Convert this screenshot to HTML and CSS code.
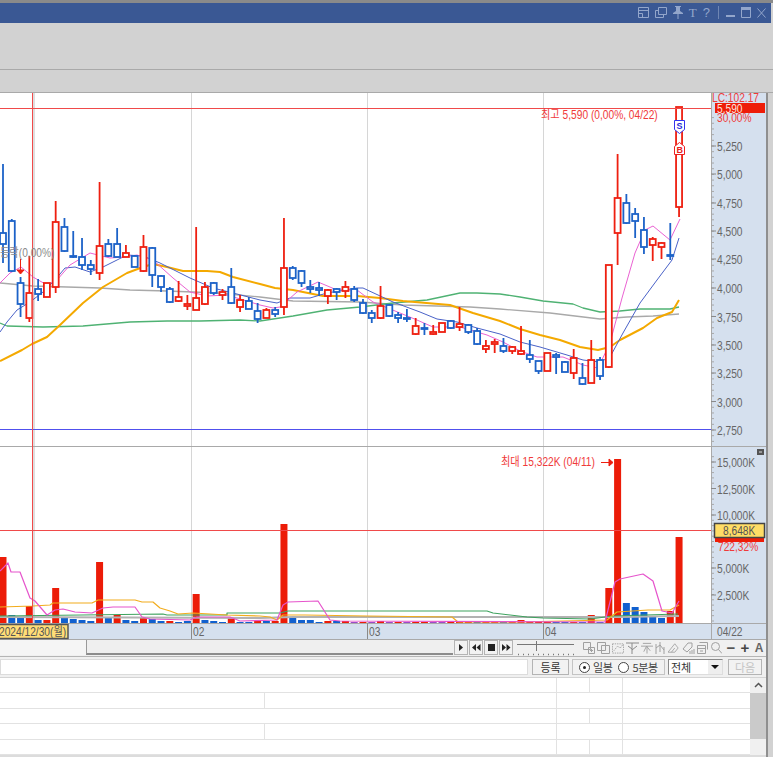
FILE: index.html
```html
<!DOCTYPE html>
<html lang="ko">
<head>
    <meta charset="UTF-8">
    <title>차트</title>
    <link rel="stylesheet" href="styles.css">
</head>
<body>
    <div class="window">
        <header class="titlebar">
            <svg class="tb-icon" width="11" height="11" viewBox="0 0 11 11"><path d="M.5.5h10v10H.5zM.5 3.5h10M.5 6.5h4v4"/></svg>
            <svg class="tb-icon tb-copy" width="12" height="11" viewBox="0 0 12 11"><path d="M3.5.5h8v7h-8zM3.5 3.5H.5v7h8V7.5"/></svg>
            <svg class="tb-icon tb-pin" width="10" height="13" viewBox="0 0 10 13"><path class="solid" d="M2 0h6v1H7v4l3 2v1H0V7l3-2V1H2z"/><path d="M5 8v5"/></svg>
            <span class="tb-text tb-t">T</span>
            <span class="tb-text tb-q">?</span>
            <span class="tb-sep"></span>
            <svg class="tb-icon tb-min" width="9" height="11" viewBox="0 0 9 11"><path class="solid" d="M0 8h9v2H0z"/></svg>
            <svg class="tb-icon tb-max" width="10" height="11" viewBox="0 0 10 11"><path d="M.5 1.5h9v9h-9z"/><path class="solid" d="M0 0h10v3H0z"/></svg>
            <svg class="tb-icon tb-close" width="9" height="10" viewBox="0 0 9 10"><path d="M.5.5l8 9M8.5.5l-8 9"/></svg>
        </header>
        <div class="toolbar"></div>
        <div class="subbar"></div>
        <div class="content">
            <div id="chart" class="chart"></div>

            <div class="controls">
                <div class="scroll-hatch"></div>
                <div class="scroll-track"></div>
                <button class="play-btn"><svg width="6" height="7" viewBox="0 0 6 7"><path d="M1 0l4 3.5-4 3.5z"/></svg></button>
                <button class="play-btn"><svg width="9" height="7" viewBox="0 0 9 7"><path d="M4 0v7L0 3.5zM8.5 0v7l-4-3.5z"/></svg></button>
                <button class="play-btn"><svg width="7" height="7" viewBox="0 0 7 7"><path d="M0 0h7v7H0z"/></svg></button>
                <button class="play-btn"><svg width="9" height="7" viewBox="0 0 9 7"><path d="M0 0v7l4-3.5zM4.5 0v7l4-3.5z"/></svg></button>
                <svg class="slider" width="60" height="16" viewBox="0 0 60 16">
                    <path class="slider-line" d="M0 4.5h57M19.5 1v10"/>
                    <path class="slider-dots" d="M1 14.5h56"/>
                </svg>
                <div class="tool-icons">
                    <svg width="12" height="12" viewBox="0 0 12 12"><path d="M.5.5h7v7h-7zM5.5 5.5h6v6h-6zM7 8.5h3M8.5 7v3"/></svg>
                    <svg width="13" height="12" viewBox="0 0 13 12"><path d="M.5.5h8v8h-8zM4.5 3.5h8v8h-8z"/></svg>
                    <svg width="12" height="12" viewBox="0 0 13 12"><path stroke-dasharray="1.5 1" d="M.5 1.5h12v10H.5zM2 9l4-5 3 2 3-4"/></svg>
                    <svg class="tool-active" width="13" height="12" viewBox="0 0 13 12"><path d="M0 1h13M6 1v11M2 4l4 3M11 4L6 8"/></svg>
                    <svg width="12" height="12" viewBox="0 0 13 12"><path d="M0 4h13M2 1h9M6.5 4v8M3 10l3-6 4 5"/></svg>
                    <svg width="11" height="12" viewBox="0 0 11 12"><path d="M1 12V2M5 10V0M9 12V5M1 6l4-3 4 5"/></svg>
                    <svg width="11" height="12" viewBox="0 0 13 12"><path d="M0 11L8 1l4 5-4 5zM4 11l4-5"/></svg>
                    <svg class="tool-gap" width="13" height="12" viewBox="0 0 13 12"><path d="M1 7l5-6h4v4L5 10zM8 9v3M10 8v4M12 7v5"/></svg>
                    <svg width="11" height="12" viewBox="0 0 11 12"><path d="M2.5.5h8v7M.5 3.5h8v8h-8zM.5 6.5h8M3 9h3"/></svg>
                    <svg class="tool-gap" width="11" height="12" viewBox="0 0 11 12"><circle cx="4.5" cy="4.5" r="4"/><path d="M7.5 7.5l3.5 4"/></svg>
                    <span class="zoom-sign zoom-minus">−</span>
                    <span class="zoom-sign">+</span>
                    <span class="zoom-sign zoom-a">A</span>
                </div>
            </div>

            <div class="form-row">
                <div class="name-field"></div>
                <button class="btn btn-reg">등록</button>
                <div class="radio-box">
                    <span class="radio radio-on"></span><span class="radio-label">일봉</span>
                    <span class="radio radio-second"></span><span class="radio-label">5분봉</span>
                </div>
                <div class="select-box">
                    <span class="select-text">전체</span>
                    <span class="select-arrow"></span>
                </div>
                <button class="btn btn-next" disabled>다음</button>
            </div>

            <div class="table-area">
                <div class="table">
                    <div class="row"><span class="c1"></span><span class="c2"></span><span class="c3"></span><span class="c4"></span></div>
                    <div class="row"><span class="ca"></span><span class="cb"></span><span class="c23"></span><span class="c4"></span></div>
                    <div class="row"><span class="c1"></span><span class="c2"></span><span class="c3"></span><span class="c4"></span></div>
                    <div class="row"><span class="ca"></span><span class="cb"></span><span class="c23"></span><span class="c4"></span></div>
                    <div class="row"><span class="c1"></span><span class="c2"></span><span class="c3"></span><span class="c4"></span></div>
                </div>
                <div class="vscroll">
                    <div class="vscroll-up"><svg width="9" height="6" viewBox="0 0 9 6"><path d="M1 5l3.5-3.5L8 5"/></svg></div>
                    <div class="vscroll-thumb"></div>
                </div>
            </div>
        </div>
    </div>
    <script src="chart.js"></script>
</body>
</html>
```

FILE: styles.css
```css
html, body {
    margin: 0;
    padding: 0;
    width: 773px;
    height: 757px;
    overflow: hidden;
    background-color: #d2d2d2;
    font-family: "Liberation Sans", "Noto Sans CJK KR", sans-serif;
}
.window {
    display: flex;
    flex-direction: column;
    height: 757px;
    border-top: 3px solid #8a8a8a;
    box-sizing: border-box;
}

/* title bar */
.titlebar {
    display: flex;
    align-items: center;
    height: 20px;
    width: 771px;
    padding-right: 5px;
    box-sizing: border-box;
    justify-content: flex-end;
    background-color: #3a5894;
}
.tb-icon {
    fill: none;
    stroke: #93a6cb;
    stroke-width: 1;
    flex: none;
}
.tb-icon .solid {
    fill: #93a6cb;
    stroke: none;
}
.tb-copy { margin-left: 6px; }
.tb-pin { margin-left: 6px; }
.tb-text {
    color: #93a6cb;
    font-size: 13px;
    line-height: 14px;
}
.tb-t {
    margin-left: 6px;
    font-family: "Liberation Serif", serif;
}
.tb-q { margin-left: 6px; }
.tb-sep {
    width: 1px;
    height: 13px;
    margin-left: 8px;
    background-color: #6f86b3;
}
.tb-min { margin-left: 7px; }
.tb-max { margin-left: 6px; }
.tb-close { margin-left: 6px; }

.toolbar {
    height: 46px;
    flex: none;
    background-color: #d2d2d2;
    border-bottom: 1px solid #a9a9a9;
}
.subbar {
    height: 22px;
    flex: none;
    background-color: #d2d2d2;
    border-bottom: 1px solid #a9a9a9;
}

.content {
    width: 766px;
    flex: 1;
    display: flex;
    flex-direction: column;
    background-color: #f0f0f0;
    box-shadow: 2px 0 0 #8f8f8f;
}

/* chart svg */
.chart {
    height: 547px;
    flex: none;
}
.chart svg { display: block; }
.plot-bg { fill: #fff; }
.axis-bg { fill: #d5e0ee; }
.sep { stroke: #a9a9a9; stroke-width: 1; }
.grid { stroke: #d6d6d6; stroke-width: 1; }
.grid-wide { stroke: #dedede; stroke-width: 2; }
.cross { stroke: #f04a4a; stroke-width: 1; }
.hline-low { stroke: #5050ee; stroke-width: 1; }
.tick { stroke: #8a8a8a; stroke-width: 1; }
.tick-minor { stroke: #a8a8a8; stroke-width: 1; }
.ma { fill: none; stroke-linejoin: round; }
.ma5 { stroke: #ea62d2; stroke-width: 1; }
.ma10 { stroke: #4a62c8; stroke-width: 1; }
.ma20 { stroke: #f4a900; stroke-width: 2; }
.ma60 { stroke: #4fb273; stroke-width: 1.3; }
.ma120 { stroke: #a9a9a9; stroke-width: 1.3; }
.vma5 { stroke: #e654cc; stroke-width: 1.2; }
.vma20 { stroke: #f2ac1c; stroke-width: 1.2; }
.vma60 { stroke: #3fa35f; stroke-width: 1.2; }
.vma120 { stroke: #b2b2b2; stroke-width: 1.8; }
.wick-r { stroke: #ee1f10; stroke-width: 1.8; }
.wick-b { stroke: #1c62c8; stroke-width: 1.8; }
.body-r { fill: #fff; stroke: #ee1f10; stroke-width: 1.8; }
.body-b { fill: #fff; stroke: #1c62c8; stroke-width: 1.8; }
.vol-r { fill: #ec1c08; }
.vol-b { fill: #1060cf; }
.vol-m { fill: #9a4cc8; }
.label {
    font-family: "Liberation Sans", "Noto Sans CJK KR", sans-serif;
    font-size: 12px;
}
.label-axis { fill: #666; }
.label-red { fill: #f03a3a; }
.label-gray { fill: #8a8a8a; }
.label-dark { fill: #555; }
.label-light { fill: #ffe3da; }
.label-sig { font-family: "Liberation Sans", sans-serif; font-size: 9px; font-weight: bold; }
.price-box { fill: #ee1c08; }
.cur-box { fill: #ffdd66; stroke: #444; stroke-width: 1.5; }
.date-box { fill: #ffdd77; stroke: #555; stroke-width: 1.5; }
.sig-s { fill: #fff; stroke: #3333ee; stroke-width: 1; }
.sig-b { fill: #fff; stroke: #ee2020; stroke-width: 1; }
.txt-s { fill: #2a2ad8; }
.txt-b { fill: #e82020; }
.arrow-red { fill: #ee1f10; stroke: #ee1f10; stroke-width: 1; }
.mini-btn { fill: #555; }
.mini-btn-line { stroke: #ddd; stroke-width: 1; }

/* chart controls */
.controls {
    display: flex;
    align-items: center;
    height: 16px;
    flex: none;
}
.scroll-hatch {
    width: 86px;
    height: 15px;
    flex: none;
    background-color: #f5f5f5;
}
.scroll-track {
    width: 367px;
    height: 15px;
    flex: none;
    box-sizing: border-box;
    background-color: #efefef;
    border-left: 1px solid #999;
    border-bottom: 2px solid #8c8c8c;
}
.play-btn {
    width: 14px;
    height: 15px;
    padding: 0;
    margin-left: 1px;
    flex: none;
    display: flex;
    align-items: center;
    justify-content: center;
    background-color: #f2f2f2;
    border: 1px solid #b4b4b4;
    box-sizing: border-box;
}
.play-btn svg { fill: #222; }
.slider {
    margin-left: 4px;
    flex: none;
}
.slider-line { fill: none; stroke: #777; stroke-width: 1; }
.slider-dots { fill: none; stroke: #777; stroke-width: 1.5; stroke-dasharray: 1 4; }
.tool-icons {
    display: flex;
    align-items: center;
    gap: 2px;
    margin-left: 6px;
    flex: none;
}
.tool-icons svg {
    fill: none;
    stroke: #a0a0a0;
    stroke-width: 1;
    flex: none;
}
.tool-icons .tool-active {
    stroke: #8a8a8a;
}
.tool-icons .tool-gap { margin-left: 1px; }
.zoom-sign {
    color: #444;
    font-size: 15px;
    font-weight: bold;
    line-height: 14px;
    width: 10px;
    text-align: center;
    margin-left: 2px;
    flex: none;
}
.zoom-minus { color: #555; }
.zoom-a { font-size: 12px; color: #666; }

/* search row */
.form-row {
    display: flex;
    align-items: center;
    height: 22px;
    padding-top: 1px;
    flex: none;
    border-top: 1px solid #b5b5b5;
    border-bottom: 1px solid #d4d4d4;
    box-sizing: border-box;
    background-color: #f0f0f0;
}
.name-field {
    width: 528px;
    height: 16px;
    flex: none;
    background-color: #fff;
    border: 1px solid #dcdcdc;
    box-sizing: border-box;
}
.btn {
    height: 16px;
    padding: 0;
    font-family: "Noto Sans CJK KR", sans-serif;
    font-size: 11px;
    line-height: 13px;
    background-color: #f2f2f2;
    border: 1px solid #b4b4b4;
    color: #333;
    flex: none;
    box-sizing: border-box;
}
.btn-reg {
    width: 37px;
    margin-left: 4px;
}
.btn-next {
    width: 34px;
    margin-left: 5px;
    color: #c4c4c4;
}
.radio-box {
    display: flex;
    align-items: center;
    width: 93px;
    height: 16px;
    margin-left: 3px;
    padding-left: 6px;
    box-sizing: border-box;
    background-color: #f2f2f2;
    border: 1px solid #c4c4c4;
    flex: none;
}
.radio {
    width: 9px;
    height: 9px;
    border: 1px solid #444;
    border-radius: 50%;
    background-color: #fff;
    flex: none;
    position: relative;
}
.radio-on::after {
    content: "";
    position: absolute;
    left: 3px;
    top: 3px;
    width: 3px;
    height: 3px;
    border-radius: 50%;
    background-color: #222;
}
.radio-second { margin-left: 6px; }
.radio-label {
    margin-left: 3px;
    font-family: "Noto Sans CJK KR", sans-serif;
    font-size: 11px;
    letter-spacing: -0.4px;
    color: #444;
    line-height: 14px;
}
.select-box {
    display: flex;
    justify-content: space-between;
    align-items: center;
    width: 55px;
    height: 16px;
    margin-left: 3px;
    background-color: #fff;
    border: 1px solid #8a8a8a;
    border-right-color: #ddd;
    border-bottom-color: #ddd;
    box-sizing: border-box;
    flex: none;
}
.select-text {
    padding-left: 2px;
    font-family: "Noto Sans CJK KR", sans-serif;
    font-size: 11px;
    color: #333;
    line-height: 14px;
}
.select-arrow {
    width: 14px;
    height: 14px;
    background-color: #eee;
    position: relative;
}
.select-arrow::after {
    content: "";
    position: absolute;
    left: 3px;
    top: 5px;
    border-left: 4px solid transparent;
    border-right: 4px solid transparent;
    border-top: 4px solid #111;
}

/* table */
.table-area {
    flex: 1;
    display: flex;
    min-height: 0;
    background-color: #fff;
    border-bottom: 2px solid #dcdcdc;
}
.table {
    width: 750px;
    flex: none;
    padding-top: 0.5px;
}
.row {
    display: flex;
    height: 15.4px;
    border-bottom: 1px solid #e2e2e2;
    box-sizing: border-box;
}
.row span {
    display: block;
    border-right: 1px solid #e2e2e2;
    box-sizing: border-box;
    flex: none;
}
.c1 { width: 557px; }
.c2 { width: 33px; }
.c3 { width: 33px; }
.c23 { width: 66px; }
.ca { width: 265px; }
.cb { width: 292px; }
.row .c4 { flex: 1; border-right: 0; }
.vscroll {
    flex: 1;
    background-color: #f0f0f0;
}
.vscroll-up {
    height: 15px;
    display: flex;
    align-items: center;
    justify-content: center;
}
.vscroll-up svg {
    fill: none;
    stroke: #555;
    stroke-width: 1.5;
}
.vscroll-thumb {
    height: 46px;
    background-color: #cacaca;
}
```

FILE: chart.js
```js
// price + volume chart, coordinates are page pixels (viewBox starts at y=93)
const NS = 'http://www.w3.org/2000/svg';
const PLOT_RIGHT = 711;
const WIDTH = 766;
const STEP = 8.78;
const LABEL_SQUEEZE = 0.85;  // the terminal font is narrower than Arial

// wick top, body top, body bottom, wick bottom, color
const CANDLES = [
    [164, 233, 244, 263, 'b'], [219, 221, 271, 272, 'b'], [277, 283, 304, 317, 'b'], [256, 293, 318, 322, 'r'],
    [279, 289, 294, 301, 'b'], [283, 283, 297, 297, 'r'], [201, 222, 287, 293, 'r'], [218, 227, 251, 252, 'b'],
    [231, 256, 257, 258, 'b'], [238, 257, 265, 270, 'b'], [260, 265, 269, 275, 'b'], [182, 246, 273, 280, 'r'],
    [239, 244, 256, 257, 'b'], [228, 244, 257, 257, 'b'], [245, 253, 257, 257, 'r'], [255, 256, 267, 267, 'b'],
    [235, 247, 271, 272, 'r'], [247, 248, 275, 287, 'b'], [275, 276, 287, 292, 'b'], [287, 289, 302, 303, 'b'],
    [281, 297, 301, 302, 'r'], [295, 304, 306, 310, 'r'], [227, 298, 310, 310, 'r'], [282, 287, 304, 305, 'r'],
    [282, 283, 293, 295, 'b'], [289, 292, 295, 300, 'r'], [268, 287, 303, 304, 'b'], [295, 300, 307, 312, 'r'],
    [297, 301, 309, 309, 'b'], [303, 311, 319, 323, 'b'], [308, 310, 318, 318, 'r'], [307, 310, 314, 317, 'b'],
    [218, 268, 307, 315, 'r'], [266, 268, 278, 280, 'b'], [270, 271, 283, 287, 'b'], [280, 287, 289, 293, 'b'],
    [282, 288, 290, 296, 'b'], [289, 290, 296, 304, 'r'], [288, 289, 292, 300, 'b'], [281, 287, 291, 298, 'r'],
    [286, 289, 300, 302, 'b'], [299, 303, 313, 314, 'b'], [310, 313, 318, 323, 'b'], [286, 306, 318, 319, 'r'],
    [304, 305, 316, 317, 'b'], [312, 315, 318, 323, 'b'], [309, 318, 319, 322, 'b'], [318, 326, 334, 335, 'r'],
    [323, 328, 329, 335, 'b'], [325, 332, 334, 335, 'r'], [323, 323, 332, 332, 'r'], [320, 321, 328, 329, 'b'],
    [307, 324, 327, 331, 'r'], [324, 325, 332, 334, 'b'], [328, 331, 344, 345, 'b'], [340, 346, 349, 353, 'r'],
    [339, 342, 344, 353, 'r'], [338, 346, 351, 353, 'b'], [346, 347, 351, 354, 'r'], [326, 351, 354, 355, 'r'],
    [340, 355, 359, 363, 'b'], [361, 361, 371, 374, 'b'], [353, 353, 371, 371, 'r'], [353, 355, 357, 374, 'b'],
    [361, 362, 372, 372, 'b'], [349, 358, 373, 379, 'r'], [363, 378, 384, 385, 'b'], [340, 360, 383, 383, 'r'],
    [357, 360, 376, 380, 'b'], [265, 265, 367, 368, 'r'], [154, 198, 233, 265, 'r'], [194, 203, 223, 224, 'b'],
    [208, 214, 221, 238, 'b'], [217, 230, 247, 254, 'b'], [237, 239, 245, 261, 'r'], [242, 243, 247, 259, 'r'],
    [223, 255, 256, 260, 'b'], [107, 107, 207, 217, 'r']
];

// volume bar top, color; the baseline is y=623
const VOLUMES = [
    [557, 'r'], [615, 'b'], [617, 'b'], [606, 'r'], [620, 'b'], [620, 'r'], [588, 'r'], [617, 'b'], [619, 'b'], [620, 'b'],
    [621, 'b'], [562, 'r'], [618, 'b'], [615, 'r'], [620, 'b'], [621, 'b'], [618, 'r'], [619, 'b'], [621, 'b'], [621, 'r'],
    [622, 'b'], [621, 'b'], [594, 'r'], [620, 'b'], [621, 'b'], [622, 'b'], [618, 'r'], [622, 'b'], [622, 'b'], [621, 'r'],
    [621, 'b'], [621, 'r'], [524, 'r'], [618, 'b'], [620, 'b'], [620, 'b'], [622, 'b'], [621, 'r'], [621, 'b'], [621, 'r'],
    [622, 'm'], [622, 'r'], [622, 'm'], [621, 'r'], [622, 'm'], [622, 'r'], [622, 'm'], [622, 'r'], [622, 'r'], [622, 'm'],
    [622, 'm'], [622, 'r'], [621, 'r'], [622, 'r'], [622, 'b'], [622, 'r'], [622, 'r'], [622, 'b'], [622, 'r'], [620, 'r'],
    [622, 'r'], [622, 'r'], [622, 'r'], [622, 'b'], [622, 'b'], [622, 'r'], [622, 'b'], [615, 'r'], [622, 'b'], [588, 'r'],
    [459, 'r'], [603, 'b'], [607, 'b'], [612, 'b'], [617, 'b'], [618, 'b'], [611, 'r'], [537, 'r']
];

const PRICE_LINES = {
    ma120: [[0,283],[33,286],[67,287],[100,288],[130,290],[167,291],[193,292],[217,293],[260,297],[293,301],[360,302],[403,305],[470,307],[500,309],[550,313],[600,319],[627,317],[653,316],[679,314]],
    ma60: [[0,323],[7,326],[43,327],[83,326],[130,322],[167,321],[200,321],[240,320],[260,321],[293,316],[327,310],[360,307],[393,303],[427,300],[460,293],[477,293],[500,294],[520,297],[543,301],[573,304],[583,308],[600,312],[620,311],[640,309],[670,309],[679,307]],
    ma20: [[0,361],[22,350],[32,344],[47,337],[60,325],[83,303],[103,287],[127,273],[143,267],[153,264],[167,267],[183,271],[207,271],[220,272],[233,277],[260,284],[275,288],[293,290],[323,296],[357,296],[380,298],[403,301],[450,305],[473,313],[500,321],[520,329],[540,335],[560,340],[580,347],[598,350],[610,347],[620,340],[643,328],[657,318],[672,312],[679,300]],
    ma10: [[0,332],[7,322],[17,310],[30,302],[43,292],[55,280],[65,268],[75,267],[90,272],[103,267],[127,255],[143,256],[160,263],[190,278],[213,288],[233,293],[260,300],[277,303],[290,298],[310,298],[327,293],[357,288],[363,288],[393,302],[420,312],[437,319],[457,322],[477,328],[500,334],[520,342],[540,347],[567,355],[583,360],[600,362],[610,357],[623,333],[640,303],[657,280],[672,260],[679,238]],
    ma5: [[0,283],[10,273],[21,267],[33,277],[47,285],[57,280],[70,265],[90,253],[110,258],[123,257],[137,255],[153,260],[173,278],[190,292],[207,296],[227,295],[260,305],[273,308],[280,307],[297,292],[318,282],[337,290],[357,290],[373,302],[400,313],[417,320],[433,327],[460,327],[487,335],[503,342],[520,351],[537,357],[563,357],[583,365],[598,368],[610,343],[622,298],[635,253],[645,230],[653,226],[670,240],[680,219]]
};

const VOLUME_LINES = {
    vma120: [[0,617],[260,618],[293,617],[453,617],[620,617],[679,616]],
    vma60: [[0,616],[163,614],[167,615],[227,615],[227,613],[280,613],[288,611],[487,611],[493,613],[527,617],[543,618],[590,619],[613,616],[678,614]],
    vma20: [[0,607],[33,606],[50,605],[53,603],[92,603],[98,600],[135,600],[142,602],[153,602],[160,608],[170,611],[178,614],[193,613],[227,615],[260,616],[270,617],[277,620],[283,615],[305,615],[367,616],[452,617],[458,622],[518,622],[607,620],[617,612],[648,610],[670,610],[679,605]],
    vma5: [[0,571],[8,563],[11,572],[20,572],[30,598],[35,601],[47,615],[55,610],[63,609],[75,612],[92,613],[103,608],[113,607],[135,607],[142,617],[150,619],[190,620],[197,617],[230,617],[240,621],[277,620],[283,605],[288,602],[318,601],[330,620],[340,621],[605,622],[615,582],[620,579],[643,574],[653,581],[662,611],[672,613],[679,601]]
};

const PRICE_TICKS = [['5,250', 146], ['5,000', 174], ['4,750', 203], ['4,500', 231], ['4,250', 259], ['4,000', 288], ['3,750', 316.5], ['3,500', 345], ['3,250', 373], ['3,000', 401.5], ['2,750', 430]];
const VOLUME_TICKS = [['15,000K', 462], ['12,500K', 488.5], ['10,000K', 515], ['5,000K', 568], ['2,500K', 595]];

const svg = document.createElementNS(NS, 'svg');
svg.setAttribute('width', WIDTH);
svg.setAttribute('height', 547);
svg.setAttribute('viewBox', `0 93 ${WIDTH} 547`);
document.getElementById('chart').appendChild(svg);

function add(tag, cls, attrs) {
    const el = document.createElementNS(NS, tag);
    el.setAttribute('class', cls);
    for (const key in attrs) el.setAttribute(key, attrs[key]);
    svg.appendChild(el);
    return el;
}

function line(cls, x1, y1, x2, y2) {
    return add('line', cls, { x1, y1, x2, y2 });
}

function text(cls, x, y, str) {
    add('text', 'label ' + cls, { transform: `translate(${x} ${y}) scale(${LABEL_SQUEEZE} 1)` }).textContent = str;
}

function drawLines(lines) {
    Object.keys(lines).forEach(key => {
        add('polyline', 'ma ' + key, { points: lines[key].join(' ') });
    });
}

// backgrounds and grid
add('rect', 'plot-bg', { x: 0, y: 93, width: PLOT_RIGHT, height: 530 });
add('rect', 'axis-bg', { x: PLOT_RIGHT, y: 93, width: WIDTH - PLOT_RIGHT, height: 546 });
add('rect', 'axis-bg', { x: 0, y: 623, width: PLOT_RIGHT, height: 16 });
[191.5, 367.5, 543.5].forEach(x => line('grid', x, 93, x, 623));
line('grid-wide', 34, 93, 34, 623);
line('sep', 0, 446.5, PLOT_RIGHT, 446.5);
line('sep', 711.5, 93, 711.5, 639);
line('sep', 711.5, 446.5, WIDTH, 446.5);
line('sep', 0, 639.5, WIDTH, 639.5);
line('sep', 0, 623.5, WIDTH, 623.5);
line('hline-low', 0, 429.5, PLOT_RIGHT, 429.5);

drawLines(PRICE_LINES);

CANDLES.forEach((c, i) => {
    const x = 3 + STEP * i;
    line('wick-' + c[4], x, c[0], x, c[3]);
    add('rect', 'body-' + c[4], { x: x - 3, y: c[1], width: 6, height: Math.max(c[2] - c[1], 1) });
});

VOLUMES.forEach((v, i) => {
    const x = 3 + STEP * i;
    add('rect', 'vol-' + v[1], { x: x - 3.5, y: v[0], width: 7, height: 623 - v[0] });
});
drawLines(VOLUME_LINES);

// crosshair and current value lines
line('cross', 32.5, 93, 32.5, 623);
line('cross', 0, 108.5, PLOT_RIGHT, 108.5);
line('cross', 0, 530.5, PLOT_RIGHT, 530.5);

// axis ticks and labels
for (let y = 146 - 28.4; y < 446; y += 5.68) line('tick-minor', PLOT_RIGHT, y, PLOT_RIGHT + 3, y);
for (let y = 462 - 5.3; y < 623; y += 5.3) line('tick-minor', PLOT_RIGHT, y, PLOT_RIGHT + 3, y);
PRICE_TICKS.concat(VOLUME_TICKS).forEach(t => {
    line('tick', PLOT_RIGHT, t[1], PLOT_RIGHT + 5, t[1]);
    text('label-axis', 717, t[1] + 5, t[0]);
});

// top of the price axis
text('label-red', 712, 102, 'LC:102.17');
add('rect', 'price-box', { x: 715, y: 103, width: 50, height: 10 });
text('label-light', 717, 112.5, '5,590');
text('label-red', 717, 122, '30,00%');
text('label-red', 541, 119, '최고 5,590 (0,00%, 04/22)');

// sell and buy signal marks on the last candle
add('path', 'sig-s', { d: 'M674.5 120.5h10v9l-5 4-5-4z' });
add('text', 'label-sig txt-s', { x: 676.5, y: 129 }).textContent = 'S';
add('path', 'sig-b', { d: 'M674.5 154.5h10v-8l-5-4-5 4z' });
add('text', 'label-sig txt-b', { x: 676.5, y: 153 }).textContent = 'B';

// lowest price label and arrow
text('label-gray', 0, 257, '등락(0,00%)');
line('arrow-red', 20.5, 259, 20.5, 270);
add('path', 'arrow-red', { d: 'M17 270h7l-3.5 4z' });

// volume labels
text('label-red', 501, 466, '최대 15,322K (04/11)');
line('arrow-red', 601, 462.5, 610, 462.5);
add('path', 'arrow-red', { d: 'M609 459l4 3.5-4 3.5z' });
add('rect', 'mini-btn', { x: 757, y: 449, width: 7, height: 6 });
line('mini-btn-line', 759, 452, 762, 452);
add('rect', 'price-box', { x: 715, y: 536, width: 49, height: 6 });
add('rect', 'cur-box', { x: 714.5, y: 523.5, width: 50, height: 14 });
text('label-dark', 723, 535, '8,648K');
text('label-red', 718, 551, '722,32%');

// time axis
[191.5, 367.5, 543.5].forEach(x => line('tick', x, 623, x, 639));
add('rect', 'date-box', { x: -2, y: 624.5, width: 70, height: 14 });
text('label-dark', -1, 636, '2024/12/30(월)');
text('label-axis', 193, 636, '02');
text('label-axis', 369, 636, '03');
text('label-axis', 545, 636, '04');
text('label-axis', 717, 636, '04/22');
```
